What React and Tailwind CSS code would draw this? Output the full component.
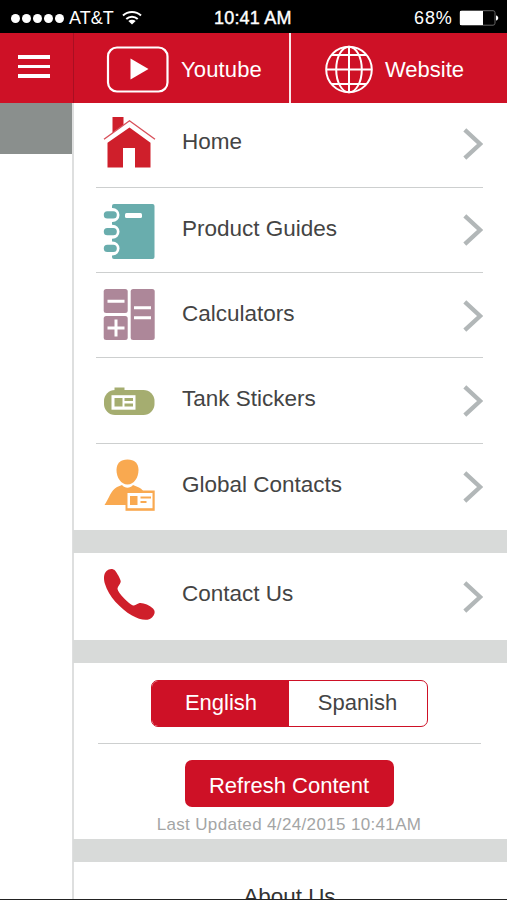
import React from "react";

function HomeIcon() {
  return (
    <svg width="54" height="84" viewBox="0 0 54 84">
      <path d="M9.500 14h11v8L9.500 30Z" fill="#cf1f2b" />
      <path d="M4.500 39.800 26.500 24.500 47.500 39.800V64.500H32V45H20V64.500H4.500Z" fill="#cf1f2b" />
      <path d="M1.500 38 26.500 20 51.500 38" fill="none" stroke="#fff" strokeWidth="3.500" />
      <path d="M1 36.300 26.500 17.800 52 36.300" fill="none" stroke="#d8505a" strokeWidth="1.400" />
    </svg>
  );
}

function GuideIcon() {
  return (
    <svg width="54" height="84" viewBox="0 0 54 84">
      <rect x="9" y="16" width="42.500" height="55" rx="2" fill="#69adad" />
      {[27, 43.7, 60.5].map((y) => (
        <g key={y}>
          <rect x="-2" y={y - 7} width="18.500" height="14" rx="7" fill="#fff" />
          <rect x="0.800" y={y - 3.8} width="13" height="7.400" rx="3.500" fill="#69adad" />
        </g>
      ))}
      <rect x="22" y="25" width="17" height="5" rx="1.500" fill="#fff" />
    </svg>
  );
}

function CalculatorIcon() {
  return (
    <svg width="54" height="84" viewBox="0 0 54 84">
      <g fill="#ad8799">
        <rect x="0.700" y="16" width="24" height="24" rx="2.500" />
        <rect x="0.700" y="43" width="24" height="24" rx="2.500" />
        <rect x="27.700" y="16" width="24" height="51" rx="2.500" />
      </g>
      <path d="M4.500 28.200h17M31 34.800h17M31 44.800h17M4.500 55h17M13 46.500v17" stroke="#fff" strokeWidth="3" fill="none" />
    </svg>
  );
}

function TankIcon() {
  return (
    <svg width="54" height="84" viewBox="0 0 54 84">
      <path d="M11.500 29.500h10v3h-10z" fill="#a5ad70" />
      <rect x="1" y="32" width="50.500" height="25" rx="11" fill="#a5ad70" />
      <rect x="8.500" y="37.200" width="24" height="14.500" fill="#fff" />
      <path d="M11.500 40h8v8.500h-8zM21.500 40h8.500v3h-8.500zM21.500 45.500h8.500v3h-8.500z" fill="#a5ad70" />
    </svg>
  );
}

function ContactsIcon() {
  return (
    <svg width="54" height="84" viewBox="0 0 54 84">
      <path d="M1.500 61C5.500 55.500 8 46 14 43L19 41C22 44.500 27 44.500 30 41L36 43.500C39 45 41 47.500 42 50V61Z" fill="#f9a950" />
      <path d="M24.500 15.500c7 0 11 4 11 10.500C35.500 33.500 31 40.500 24.500 40.500S13.500 33.500 13.500 26C13.500 19.500 17.500 15.500 24.500 15.500Z" fill="#f9a950" />
      <rect x="22.500" y="46.500" width="29.200" height="20.300" fill="#f9a950" />
      <rect x="24.500" y="49" width="25" height="15.200" fill="#fff" />
      <path d="M27 52h7.500v9H27zM37.500 52.500h10.500v2H37.500zM37.500 57h6v2h-6z" fill="#f9a950" />
    </svg>
  );
}

function PhoneIcon() {
  return (
    <svg width="54" height="84" viewBox="0 0 54 84">
      <path
        d="M3.500 18C6 15.500 10 15.300 12 17.500C14 20 17 25 17.700 28C18 31 14.500 33 14.500 36C15 40 25.500 50.500 30 52.500C32 53 33 51 36 50.200C40 49.500 46 52 50 55.500C53 58.500 51.500 62 49 64.500C45 68.500 37 67 29 62.500C17 55.500 5.500 43 2 31C0.500 26 0.500 21 3.500 18Z"
        fill="#cf1f2b"
      />
    </svg>
  );
}

function Chevron() {
  return (
    <svg width="20" height="32" viewBox="0 0 20 32">
      <path d="M1.800 1.800 17.100 16 1.800 30.200" fill="none" stroke="#b2b7b8" strokeWidth="4.300" />
    </svg>
  );
}

const ROWS = [
  { label: "Home", Icon: HomeIcon, size: "h-[85px]", text: "leading-[77px]", chevron: "pt-[25px]", line: true },
  { label: "Product Guides", Icon: GuideIcon, size: "h-[85px]", text: "leading-[81px]", chevron: "pt-[26px]", line: true },
  { label: "Calculators", Icon: CalculatorIcon, size: "h-[85px]", text: "leading-[81px]", chevron: "pt-[27px]", line: true },
  { label: "Tank Stickers", Icon: TankIcon, size: "h-[86px]", text: "leading-[82px]", chevron: "pt-[27px]", line: true },
  { label: "Global Contacts", Icon: ContactsIcon, size: "h-[86px]", text: "leading-[81px]", chevron: "pt-[27px]", line: false },
];

function Row({ label, Icon, size, text, chevron, line }) {
  return (
    <div
      className={`ml-[23px] mr-6 flex items-start pl-[7px] ${size} ${line ? "border-b border-[#cdcfcf]" : ""}`}
    >
      <Icon />
      <span className={`ml-[25px] flex-1 whitespace-nowrap text-[22.500px] text-[#444] ${text}`}>{label}</span>
      <span className={chevron}>
        <Chevron />
      </span>
    </div>
  );
}

function Band() {
  return <div className="h-[23px] shrink-0 bg-[#d8dad9]" />;
}

function StatusBar() {
  return (
    <div className="flex h-[33px] items-center bg-black pl-[11px] pt-[3px] text-[18px] leading-[30px] text-white">
      <div className="flex w-[58px] gap-[2px]">
        {[0, 1, 2, 3, 4].map((i) => (
          <span key={i} className="size-[9px] rounded-full bg-white" />
        ))}
      </div>
      <span className="w-[53px] text-[18px]">AT&amp;T</span>
      <svg width="20" height="16" viewBox="0 0 20 16" fill="none" stroke="#fff" strokeWidth="2">
        <path d="M1 5.500C6 0.800 14 0.800 19 5.500M4.300 9C7.500 6 12.500 6 15.700 9" />
        <path d="M10 14.500 6.300 11C8.500 9.200 11.500 9.200 13.700 11Z" fill="#fff" stroke="none" />
      </svg>
      <span className="ml-[72px] w-[200px] whitespace-nowrap tracking-[0.200px] [-webkit-text-stroke:0.400px_white]">10:41 AM</span>
      <span className="w-[44px] tracking-[0.900px]">68%</span>
      <svg width="42" height="16" viewBox="0 0 42 16">
        <rect x="2" y="0.700" width="35" height="14.500" rx="2" fill="none" stroke="#666" />
        <path d="M2 1h23v14H2z" fill="#fff" />
        <path d="M38 5.500C41 6 41 10 38 10.500Z" fill="#fff" />
      </svg>
    </div>
  );
}

function Header() {
  return (
    <div className="flex h-[70px] bg-[#ce1126] text-[22px] text-white">
      <div className="flex w-[74px] flex-col gap-[6px] border-r border-[#a90f22] pl-[18px] pt-[22px]">
        <span className="h-[3.500px] w-8 bg-white" />
        <span className="h-[3.500px] w-8 bg-white" />
        <span className="h-[3.500px] w-8 bg-white" />
      </div>
      <div className="flex w-[217px] items-center border-r-2 border-white/90 pl-8 pt-[3px]">
        <svg width="64" height="48" viewBox="0 0 64 48">
          <rect x="2" y="1.500" width="59.500" height="44" rx="9" fill="none" stroke="#fff" strokeWidth="2.200" />
          <path d="M24.500 12.500 42.500 23 24.500 33.500Z" fill="#fff" />
        </svg>
        <span className="ml-[11px] tracking-[0.150px]">Youtube</span>
      </div>
      <div className="flex items-center pl-[33px] pt-[3px]">
        <svg width="50" height="50" viewBox="0 0 50 50" fill="none" stroke="#fff" strokeWidth="2">
          <circle cx="25" cy="24.500" r="22.800" />
          <ellipse cx="25" cy="24.500" rx="12.800" ry="22.800" />
          <path d="M25 1.500v46M2 24.500h46M7 10h36M7 39h36" />
        </svg>
        <span className="ml-[11px]">Website</span>
      </div>
    </div>
  );
}

export default function App() {
  return (
    <div className="flex h-[900px] w-[507px] flex-col overflow-hidden border-b border-[#222] bg-white font-['Liberation_Sans',Arial,sans-serif]">
      <StatusBar />
      <Header />
      <div className="flex min-h-0 flex-1">
        <div className="w-[72px] shrink-0">
          <div className="h-[51px] bg-[#8a8f8d]" />
        </div>
        <main className="flex min-w-0 flex-1 flex-col border-l-2 border-[#dedfdf]">
          <div className="-ml-px">
            {ROWS.map((row) => (
              <Row key={row.label} {...row} />
            ))}
            <Band />
            <Row label="Contact Us" Icon={PhoneIcon} size="h-[87px]" text="leading-[81px]" chevron="pt-[28px]" />
            <Band />
            <section className="flex h-[176px] flex-col items-center pr-[2px] pt-[17px] text-[22px]">
              <div className="flex h-[47px] w-[277px] overflow-hidden rounded-[7px] border-[1.500px] border-[#ce1126] leading-[43px]">
                <span className="w-[137px] bg-[#ce1126] pl-[2px] text-center text-white">English</span>
                <span className="flex-1 text-center text-[#444]">Spanish</span>
              </div>
              <div className="mt-4 h-px w-[383px] bg-[#cdcfcf]" />
              <div className="mt-4 h-[47px] w-[209px] rounded-[7px] bg-[#ce1126] text-center leading-[51px] text-white">
                Refresh Content
              </div>
              <div className="mt-[6px] whitespace-nowrap text-[17px] leading-[23px] tracking-[0.350px] text-[#a3a5a5]">
                Last Updated 4/24/2015 10:41AM
              </div>
            </section>
            <Band />
            <div className="h-[37px] overflow-hidden pr-px text-center text-[22.400px] leading-[70px] text-[#333]">About Us</div>
          </div>
        </main>
      </div>
    </div>
  );
}
